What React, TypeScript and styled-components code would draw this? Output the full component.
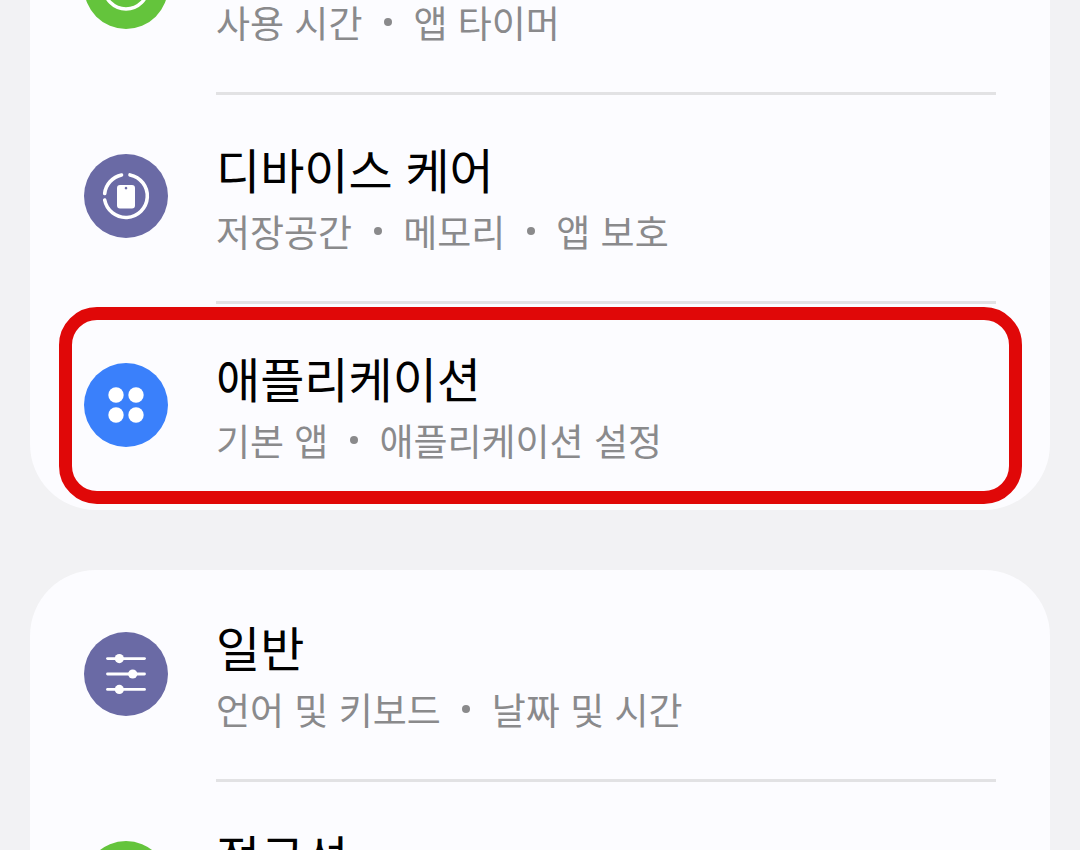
import React from "react";
import styled, { createGlobalStyle } from "styled-components";

const GlobalStyle = createGlobalStyle`
  html, body {
    margin: 0;
    height: 850px;
    overflow: hidden;
    background: #f2f2f4;
  }
`;

const Page = styled.div`
  width: 1080px;
  height: 850px;
  overflow: hidden;
  font-family: "Noto Sans CJK KR", "Noto Sans", sans-serif;
`;

const Card = styled.section<{ $offset?: number }>`
  margin: ${(p) => p.$offset ?? 0}px 30px 60px;
  background: #fcfcff;
  border-radius: 66px;
`;

const Row = styled.div<{ $first?: boolean }>`
  position: relative;
  box-sizing: border-box;
  height: ${(p) => (p.$first ? 209 : 206)}px;
  padding: 0 54px ${(p) => (p.$first ? 1 : 4)}px;
  display: flex;
  align-items: center;
  gap: 48px;
`;

const Divider = styled.div`
  height: 3px;
  margin: 0 54px 0 186px;
  background: #e2e2e4;
`;

const IconCircle = styled.div<{ $color: string }>`
  width: 84px;
  height: 84px;
  flex-shrink: 0;
  border-radius: 50%;
  background: ${(p) => p.$color};
  svg {
    display: block;
  }
`;

const RowText = styled.div`
  display: flex;
  flex-direction: column;
  gap: 12px;
`;

const Title = styled.div`
  font-size: 48px;
  line-height: 58px;
  word-spacing: 2px;
  color: #000;
`;

const Subtitle = styled.div`
  font-size: 37px;
  line-height: 44px;
  word-spacing: 2px;
  color: #8a8a8c;
  display: flex;
  align-items: center;
  gap: 21.5px;
`;

const Dot = styled.span`
  width: 8px;
  height: 8px;
  border-radius: 50%;
  background: #8a8a8c;
`;

const Highlight = styled.div`
  position: absolute;
  top: 3px;
  left: 29px;
  width: 963px;
  height: 197px;
  box-sizing: border-box;
  border: 13px solid #e00808;
  border-radius: 38px;
  pointer-events: none;
`;

const PURPLE = "#6a6aa5";
const BLUE = "#3a80fb";
const GREEN = "#64c43c";

const WellbeingIcon = () => (
  <svg width="84" height="84" viewBox="0 0 84 84" fill="none" stroke="#fff" strokeWidth="3.4">
    <circle cx="42" cy="42" r="22" />
  </svg>
);

const CareIcon = () => (
  <svg width="84" height="84" viewBox="0 0 84 84" fill="none">
    <g stroke="#fff" strokeWidth="3.6" strokeLinecap="round">
      <path d="M46 20.9 A21.5 21.5 0 1 1 20.7 46" />
      <path d="M20.7 39.5 A21.5 21.5 0 0 1 37.5 21" />
    </g>
    <path
      fillRule="evenodd"
      fill="#fff"
      d="M36 31 h12 a3 3 0 0 1 3 3 v17.5 a3 3 0 0 1 -3 3 h-12 a3 3 0 0 1 -3 -3 V34 a3 3 0 0 1 3 -3 Z M42 32.8 a1.3 1.3 0 1 0 0.01 0 Z"
    />
  </svg>
);

const AppsIcon = () => (
  <svg width="84" height="84" viewBox="0 0 84 84" fill="#fff">
    <circle cx="32" cy="32" r="7.7" />
    <circle cx="52" cy="32" r="7.7" />
    <circle cx="32" cy="52" r="7.7" />
    <circle cx="52" cy="52" r="7.7" />
  </svg>
);

const SlidersIcon = () => (
  <svg width="84" height="84" viewBox="0 0 84 84" fill="#fff">
    <g stroke="#fff" strokeWidth="2.8" strokeLinecap="round">
      <path d="M23.5 26.6 H60.5" />
      <path d="M23.5 42 H60.5" />
      <path d="M23.5 57.4 H60.5" />
    </g>
    <circle cx="35.3" cy="26.6" r="4.6" />
    <circle cx="48.7" cy="42" r="4.6" />
    <circle cx="35.3" cy="57.4" r="4.6" />
  </svg>
);

type Item = {
  title: string;
  parts: string[];
  color: string;
  icon: React.ReactNode;
  highlighted?: boolean;
};

const firstCard: Item[] = [
  { title: "디지털 웰빙 및 자녀 보호", parts: ["사용 시간", "앱 타이머"], color: GREEN, icon: <WellbeingIcon /> },
  { title: "디바이스 케어", parts: ["저장공간", "메모리", "앱 보호"], color: PURPLE, icon: <CareIcon /> },
  { title: "애플리케이션", parts: ["기본 앱", "애플리케이션 설정"], color: BLUE, icon: <AppsIcon />, highlighted: true },
];

const secondCard: Item[] = [
  { title: "일반", parts: ["언어 및 키보드", "날짜 및 시간"], color: PURPLE, icon: <SlidersIcon /> },
  { title: "접근성", parts: ["시각 보조", "청각 보조"], color: GREEN, icon: <WellbeingIcon /> },
];

const renderRows = (items: Item[]) =>
  items.map((item, i) => (
    <React.Fragment key={item.title}>
      {i > 0 && <Divider />}
      <Row $first={i === 0}>
        <IconCircle $color={item.color}>{item.icon}</IconCircle>
        <RowText>
          <Title>{item.title}</Title>
          <Subtitle>
            {item.parts.map((part, j) => (
              <React.Fragment key={part}>
                {j > 0 && <Dot />}
                <span>{part}</span>
              </React.Fragment>
            ))}
          </Subtitle>
        </RowText>
        {item.highlighted && <Highlight />}
      </Row>
    </React.Fragment>
  ));

const App = () => (
  <Page>
    <GlobalStyle />
    <Card $offset={-117}>{renderRows(firstCard)}</Card>
    <Card>{renderRows(secondCard)}</Card>
  </Page>
);

export default App;
